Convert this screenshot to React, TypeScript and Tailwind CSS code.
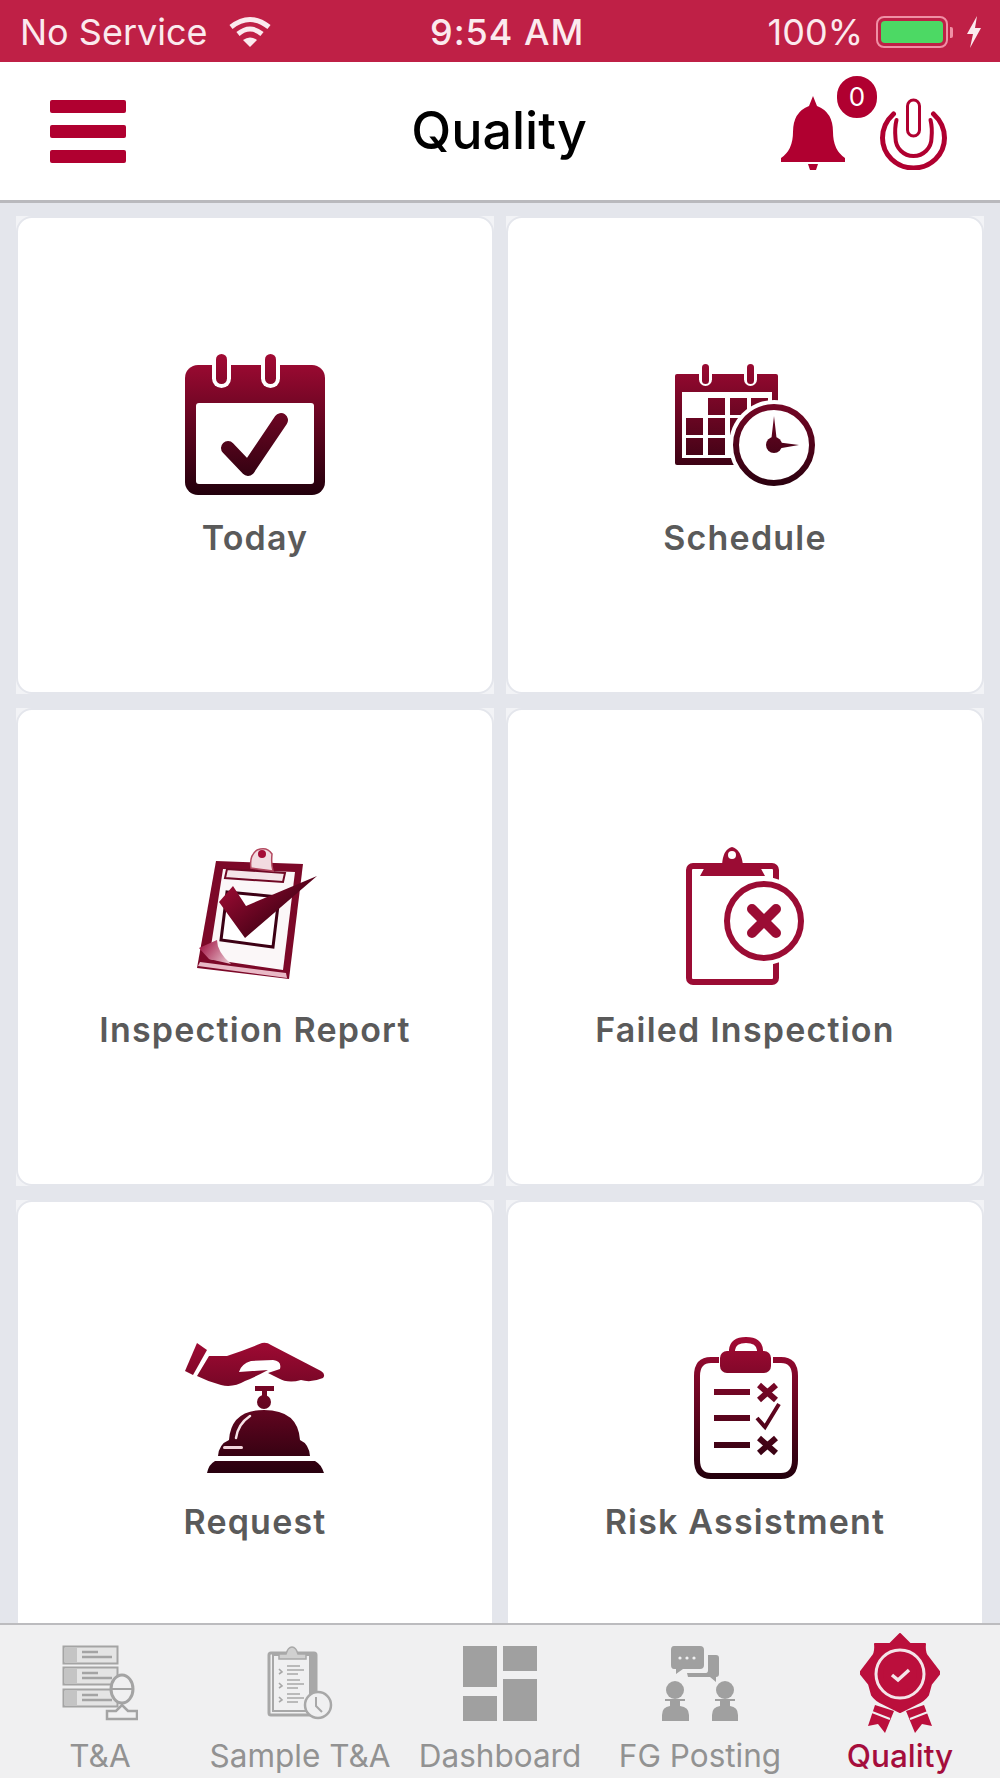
import type { ReactNode } from "react";

// shared top-to-bottom wine gradient, in the 144 unit icon space
function Wine({ id, top = "#a00a33", bottom = "#22000c" }: { id: string; top?: string; bottom?: string }) {
  return (
    <defs>
      <linearGradient id={id} gradientUnits="userSpaceOnUse" x1="0" y1="5" x2="0" y2="143">
        <stop offset="0" stopColor={top} />
        <stop offset="1" stopColor={bottom} />
      </linearGradient>
    </defs>
  );
}

function Icon144({ children }: { children: ReactNode }) {
  return (
    <svg viewBox="0 0 144 144" className="w-[144px] h-[144px]">
      {children}
    </svg>
  );
}

function TodayIcon() {
  return (
    <Icon144>
      <Wine id="today" />
      <rect x="2" y="13" width="140" height="130" rx="13" fill="url(#today)" />
      <rect x="13" y="51" width="118" height="81" rx="3" fill="#fff" />
      <rect x="29" y="0" width="19" height="36" rx="9.5" fill="#fff" />
      <rect x="78" y="0" width="19" height="36" rx="9.5" fill="#fff" />
      <rect x="33" y="2" width="11" height="30" rx="5.5" fill="url(#today)" />
      <rect x="82" y="2" width="11" height="30" rx="5.5" fill="url(#today)" />
      <path d="M45 96 L65 117 L98 68" fill="none" stroke="url(#today)" strokeWidth="14" strokeLinejoin="round" strokeLinecap="round" />
    </Icon144>
  );
}

function ScheduleIcon() {
  const cells = [
    [35, 46], [57, 46], [78, 46],
    [13, 66], [35, 66], [57, 66], [78, 66],
    [13, 86], [35, 86], [57, 86],
  ];
  return (
    <Icon144>
      <Wine id="schedule" />
      <rect x="2" y="22" width="103" height="91" rx="2" fill="url(#schedule)" />
      <rect x="9" y="40" width="90" height="66" fill="#fff" />
      <rect x="26" y="10" width="13" height="24" rx="6.5" fill="#fff" />
      <rect x="71" y="10" width="13" height="24" rx="6.5" fill="#fff" />
      <rect x="29" y="12" width="7" height="20" rx="3.5" fill="url(#schedule)" />
      <rect x="74" y="12" width="7" height="20" rx="3.5" fill="url(#schedule)" />
      {cells.map(([x, y]) => (
        <rect key={`${x}-${y}`} x={x} y={y} width="17" height="17" fill="url(#schedule)" />
      ))}
      <circle cx="101" cy="93" r="45" fill="#fff" />
      <circle cx="101" cy="93" r="38" fill="#fff" stroke="url(#schedule)" strokeWidth="6" />
      <circle cx="101" cy="93" r="8" fill="url(#schedule)" />
      <path d="M98 90 L101 64 L104 90 Z M103 90 L126 93 L103 97 Z" fill="url(#schedule)" />
    </Icon144>
  );
}

function InspectionIcon() {
  return (
    <Icon144>
      <defs>
        <linearGradient id="insp" gradientUnits="userSpaceOnUse" x1="30" y1="40" x2="80" y2="105">
          <stop offset="0" stopColor="#a50c36" />
          <stop offset="1" stopColor="#3a0012" />
        </linearGradient>
        <linearGradient id="fold" gradientUnits="userSpaceOnUse" x1="16" y1="100" x2="50" y2="125">
          <stop offset="0" stopColor="#a01040" />
          <stop offset="1" stopColor="#f6e6ea" />
        </linearGradient>
      </defs>
      <path d="M33 17 L120 20 L106 135 L14 124 Z" fill="#7c0828" />
      <path d="M40 25 L112 28 L100 126 L26 115 Z" fill="#fbf7f8" />
      <path d="M16 104 L26 115 L48 120 Q34 108 34 96 Z" fill="url(#fold)" />
      <path d="M15 122 L104 134 L103 129 L17 118 Z" fill="#e9b9c6" />
      <path d="M44 25 L102 29 L100 38 L42 34 Z" fill="#f4e5e8" stroke="#6f0824" strokeWidth="2" />
      <path d="M68 24 Q66 12 74 6 Q84 2 89 10 Q88 20 90 27 Z" fill="#f2dbe0" stroke="#b3485f" strokeWidth="1.5" />
      <circle cx="79" cy="10" r="4" fill="#a50c36" />
      <path d="M44 48 L96 53 L90 103 L38 96 Z" fill="#fff" stroke="#3c0014" strokeWidth="3" />
      <path d="M36 58 L50 42 L63 62 L134 32 L62 94 Z" fill="url(#insp)" />
    </Icon144>
  );
}

function FailedIcon() {
  const c = "#9b0c34";
  return (
    <Icon144>
      <rect x="16" y="22" width="87" height="116" rx="4" fill="none" stroke={c} strokeWidth="6" />
      <path d="M27 32 L33 21 H49 Q50 5 59 3 Q68 5 70 21 H86 L92 32 Z" fill={c} />
      <circle cx="59" cy="11" r="4" fill="#fff" />
      <circle cx="91" cy="77" r="44" fill="#fff" />
      <circle cx="91" cy="77" r="37" fill="#fff" stroke={c} strokeWidth="6" />
      <path d="M79 65 L103 89 M103 65 L79 89" stroke={c} strokeWidth="10" strokeLinecap="round" />
    </Icon144>
  );
}

function RequestIcon() {
  return (
    <Icon144>
      <Wine id="request" />
      <path d="M14 7 L24 14 L10 39 L2 35 Z" fill="url(#request)" />
      <path d="M26 20 L44 20 Q62 14 79 7 Q84 6 88 9 L138 35 Q143 38 140 42 Q128 47 118 44 Q105 48 95 42 L85 37 L97 33 Q99 25 90 24 L68 25 Q58 28 56 36 L85 34 Q70 42 62 45 Q50 52 38 49 Q26 46 14 40 Z" fill="url(#request)" />
      <path d="M72 50 H91 V55 H84 V62 H79 V55 H72 Z" fill="url(#request)" />
      <circle cx="81" cy="66" r="7" fill="url(#request)" />
      <path d="M35 120 Q36 108 46 104 Q48 74 81 74 Q115 74 117 104 Q126 108 127 120 Z" fill="url(#request)" />
      <path d="M53 102 Q55 88 67 80" fill="none" stroke="#f7e3e8" strokeWidth="2.5" strokeLinecap="round" />
      <rect x="40" y="110" width="20" height="3" rx="1.5" fill="#f2d5dc" />
      <path d="M32 125 H132 Q138 128 141 137 H24 Q26 128 32 125 Z" fill="url(#request)" />
    </Icon144>
  );
}

function RiskIcon() {
  return (
    <Icon144>
      <Wine id="risk" />
      <path d="M46 24 H38 Q24 24 24 40 V124 Q24 140 38 140 H108 Q122 140 122 124 V40 Q122 24 108 24 H100" fill="none" stroke="url(#risk)" strokeWidth="6" />
      <rect x="47" y="15" width="51" height="22" rx="7" fill="url(#risk)" />
      <path d="M59 18 V14 Q60 4 73 4 Q86 4 87 14 V18" fill="none" stroke="url(#risk)" strokeWidth="6" />
      <rect x="41" y="53" width="36" height="6" fill="url(#risk)" />
      <rect x="41" y="79" width="36" height="6" fill="url(#risk)" />
      <rect x="41" y="106" width="36" height="6" fill="url(#risk)" />
      <path d="M86 49 L103 64 M103 49 L86 64" stroke="url(#risk)" strokeWidth="6" />
      <path d="M84 82 L92 91 L106 68" fill="none" stroke="url(#risk)" strokeWidth="4" />
      <path d="M86 102 L103 117 M103 102 L86 117" stroke="url(#risk)" strokeWidth="6" />
    </Icon144>
  );
}

function Card({ label, icon }: { label: string; icon: ReactNode }) {
  return (
    <div className="h-[478px] bg-[#f2f3f6] shrink-0">
      <div className="h-full border-2 border-[#e4e6ec] rounded-[16px] bg-white pb-[2px] flex flex-col items-center justify-center gap-[24px]">
        {icon}
        <div className="text-[34px] leading-[36px] font-semibold tracking-[1.2px] text-[#5a5a5a] whitespace-nowrap">{label}</div>
      </div>
    </div>
  );
}

function TaIcon() {
  const c = "#a4a4a4";
  return (
    <svg viewBox="0 0 76 76" className="w-[76px] h-[76px]" fill="none" stroke={c}>
      {[1, 22, 44].map((y) => (
        <g key={y}>
          <rect x="1.5" y={y + 0.5} width="54" height="17" strokeWidth="2" fill="#e4e4e4" />
          <rect x="3" y={y + 2} width="12" height="14" fill="#c4c4c4" stroke="none" />
          <path d={`M20 ${y + 6} H36 M20 ${y + 11} H50`} strokeWidth="2.5" />
        </g>
      ))}
      <ellipse cx="60" cy="44" rx="11" ry="14" fill="#f0f0f1" strokeWidth="3" />
      <path d="M48 44 H72" strokeWidth="2" />
      <path d="M45 74 V66 H54 L60 60 L66 66 H75 V74 Z" fill="#f0f0f1" strokeWidth="2.5" />
    </svg>
  );
}

function SampleIcon() {
  const c = "#a8a8a8";
  return (
    <svg viewBox="0 0 76 76" className="w-[76px] h-[76px]" fill="none" stroke={c}>
      <rect x="7" y="8" width="47" height="62" rx="2" strokeWidth="3" />
      <rect x="11" y="10" width="43" height="56" strokeWidth="2" />
      <path d="M50 10 V50" strokeWidth="6" />
      <path d="M17 9 H24 Q26 2 30 2 Q34 2 36 9 H44 V14 H17 Z" fill="#d0d0d0" strokeWidth="1.5" />
      {[24, 38, 52].map((y) => (
        <path key={y} d={`M17 ${y} L20 ${y + 3} L17 ${y + 5} M25 ${y - 3} H38 M25 ${y + 1} H42 M25 ${y + 5} H36`} strokeWidth="1.6" />
      ))}
      <circle cx="56" cy="60" r="13" fill="#f0f0f1" strokeWidth="2.5" />
      <path d="M54 52 V61 L60 67" strokeWidth="2" />
    </svg>
  );
}

function DashIcon() {
  return (
    <svg viewBox="0 0 76 76" className="w-[76px] h-[76px]" fill="#a0a0a0">
      <rect x="1" y="1" width="34" height="41" />
      <rect x="1" y="51" width="34" height="25" />
      <rect x="41" y="1" width="34" height="25" />
      <rect x="41" y="34" width="34" height="42" />
    </svg>
  );
}

function FgIcon() {
  const c = "#a0a0a0";
  return (
    <svg viewBox="0 0 76 76" className="w-[76px] h-[76px]" fill={c}>
      <path d="M12 1 H38 Q42 1 42 5 V20 Q42 24 38 24 H21 L14 29 V24 H12 Q9 24 9 20 V5 Q9 1 12 1 Z" />
      <path d="M46 10 H54 Q57 10 57 13 V29 Q57 32 54 32 V37 L48 32 H26 L25 28 H44 Q46 28 46 25 Z" />
      <circle cx="18" cy="13" r="1.6" fill="#f0f0f1" />
      <circle cx="25" cy="13" r="1.6" fill="#f0f0f1" />
      <circle cx="32" cy="13" r="1.6" fill="#f0f0f1" />
      <circle cx="13" cy="45" r="9" />
      <path d="M3 54 H23 V56 H18 V61 Q27 62 27 70 V76 H0 V70 Q0 62 8 61 V56 H3 Z" />
      <circle cx="63" cy="45" r="9" />
      <path d="M53 54 H73 V56 H68 V61 Q76 62 76 70 V76 H50 V70 Q50 62 58 61 V56 H53 Z" />
    </svg>
  );
}

function QualityIcon() {
  const c = "#bb0f3c";
  return (
    <svg viewBox="0 0 80 100" className="w-[80px] h-[100px]">
      <path d="M15 72 L8 93 L18 91 L25 100 L34 78 Z M64 72 L72 93 L62 91 L55 100 L46 78 Z" fill={c} />
      <path d="M12 79 L30 86 M68 79 L50 86" stroke="#f0f0f1" strokeWidth="2" />
      <path d="M40 1 L50 11 L65 11 Q64 20 68 24 L80 40 L71 51 L68 62 Q64 68 56 71 L46 76 L40 79 L34 76 L24 71 Q16 68 12 62 L9 51 L0 40 L12 24 Q16 20 15 11 L30 11 Z" fill={c} stroke={c} strokeWidth="2" strokeLinejoin="round" />
      <circle cx="40" cy="41" r="24" fill="none" stroke="#f4e5e9" strokeWidth="3" />
      <circle cx="40" cy="41" r="17" fill={c} />
      <path d="M32 42 L38 47 L49 37" fill="none" stroke="#f4e5e9" strokeWidth="3.5" />
    </svg>
  );
}

function Tab({ label, icon, active }: { label: string; icon: ReactNode; active?: boolean }) {
  return (
    <div className="w-[200px] flex flex-col items-center">
      <div className="h-[100px] flex items-center justify-center">{icon}</div>
      <div className={`mt-[6px] text-[31.5px] leading-[34px] whitespace-nowrap ${active ? "text-[#a50d3c] font-medium" : "text-[#929292]"}`}>
        {label}
      </div>
    </div>
  );
}

export default function App() {
  return (
    <div className="w-full h-[1778px] flex flex-col overflow-hidden bg-[#e4e6ec] [font-family:Inter,sans-serif]">
      {/* Status bar */}
      <div className="h-[62px] shrink-0 bg-[#bf2046] text-[#fbeaee] flex items-center pl-[20px] pr-[17px] pt-[2px] text-[36px]">
        <div className="w-[410px] flex items-center gap-[20px]">
          <span>No Service</span>
          <svg viewBox="0 0 44 32" className="w-[44px] h-[32px]" fill="none" stroke="currentColor" strokeWidth="5">
            <path d="M3 11 Q22 -4 41 11" />
            <path d="M10 18 Q22 8 34 18" />
            <path d="M22 31 L15 24 Q22 19 29 24 Z" fill="currentColor" stroke="none" />
          </svg>
        </div>
        <span className="font-medium tracking-[1px]">9:54 AM</span>
        <div className="ml-auto flex items-center">
          <span>100%</span>
          <div className="ml-[13px] w-[72px] h-[32px] rounded-[8px] border-2 border-[#f08fa5] p-[3px]">
            <div className="h-full rounded-[4px] bg-[#4cd964]" />
          </div>
          <div className="ml-[2px] w-[3px] h-[11px] rounded-r-[2px] bg-[#f08fa5]" />
          <svg viewBox="0 0 16 32" className="ml-[12px] w-[18px] h-[32px]" fill="currentColor">
            <path d="M11 0 L1 18 H7 L4 32 L15 12 H9 Z" />
          </svg>
        </div>
      </div>

      {/* Header */}
      <div className="h-[141px] shrink-0 bg-white border-b-[3px] border-[#b9b9bd] grid grid-cols-[1fr_auto_1fr] items-center pl-[50px] pr-[52px]">
        <div className="flex flex-col gap-[12px] w-[76px]">
          <div className="h-[13px] rounded-[2px] bg-[#b00030]" />
          <div className="h-[13px] rounded-[2px] bg-[#b00030]" />
          <div className="h-[13px] rounded-[2px] bg-[#b00030]" />
        </div>
        <div className="text-[52px] leading-none font-medium text-black">Quality</div>
        <div className="flex items-center justify-end gap-[34px]">
          <div className="relative">
            <svg viewBox="0 0 64 74" className="w-[64px] h-[78px] mt-[4px]" fill="#b00030">
              <path d="M32 0 L36 10 Q52 16 52 36 Q52 54 64 62 V66 H0 V62 Q12 54 12 36 Q12 16 28 10 Z" />
              <path d="M27 68 H37 L35 74 H29 Z" />
            </svg>
            <div className="absolute -top-[16px] left-[54px] w-[44px] h-[46px] rounded-full border-2 border-white bg-[#b00030] text-white text-[26px] leading-none flex items-center justify-center">
              0
            </div>
          </div>
          <svg viewBox="0 0 68 72" className="w-[69px] h-[72px] mt-[6px]" fill="none">
            <path d="M14 16 Q3 26 3 40 A31 30 0 0 0 65 40 Q65 26 54 16" stroke="#b00030" strokeWidth="5" strokeLinecap="round" />
            <path d="M17 22 Q11 30 11 40 A23 22 0 0 0 57 40 Q57 30 51 22" stroke="#fff" strokeWidth="3" strokeLinecap="round" />
            <path d="M17 22 Q15 30 16 40 A18 18 0 0 0 52 40 Q53 30 51 22" stroke="#b00030" strokeWidth="4" strokeLinecap="round" />
            <rect x="28" y="2" width="12" height="36" rx="6" stroke="#b00030" strokeWidth="3" fill="#fff" />
          </svg>
        </div>
      </div>

      {/* Menu cards */}
      <div className="flex-1 min-h-0 overflow-hidden pt-[13px] px-[16px]">
        <div className="grid grid-cols-2 gap-x-[12px] gap-y-[14px]">
          <Card label="Today" icon={<TodayIcon />} />
          <Card label="Schedule" icon={<ScheduleIcon />} />
          <Card label="Inspection Report" icon={<InspectionIcon />} />
          <Card label="Failed Inspection" icon={<FailedIcon />} />
          <Card label="Request" icon={<RequestIcon />} />
          <Card label="Risk Assistment" icon={<RiskIcon />} />
        </div>
      </div>

      {/* Tab bar */}
      <div className="h-[155px] shrink-0 bg-[#f0f0f1] border-t-2 border-[#bcbcbf] pt-[8px] flex">
        <Tab label="T&A" icon={<TaIcon />} />
        <Tab label="Sample T&A" icon={<SampleIcon />} />
        <Tab label="Dashboard" icon={<DashIcon />} />
        <Tab label="FG Posting" icon={<FgIcon />} />
        <Tab label="Quality" icon={<QualityIcon />} active />
      </div>
    </div>
  );
}
